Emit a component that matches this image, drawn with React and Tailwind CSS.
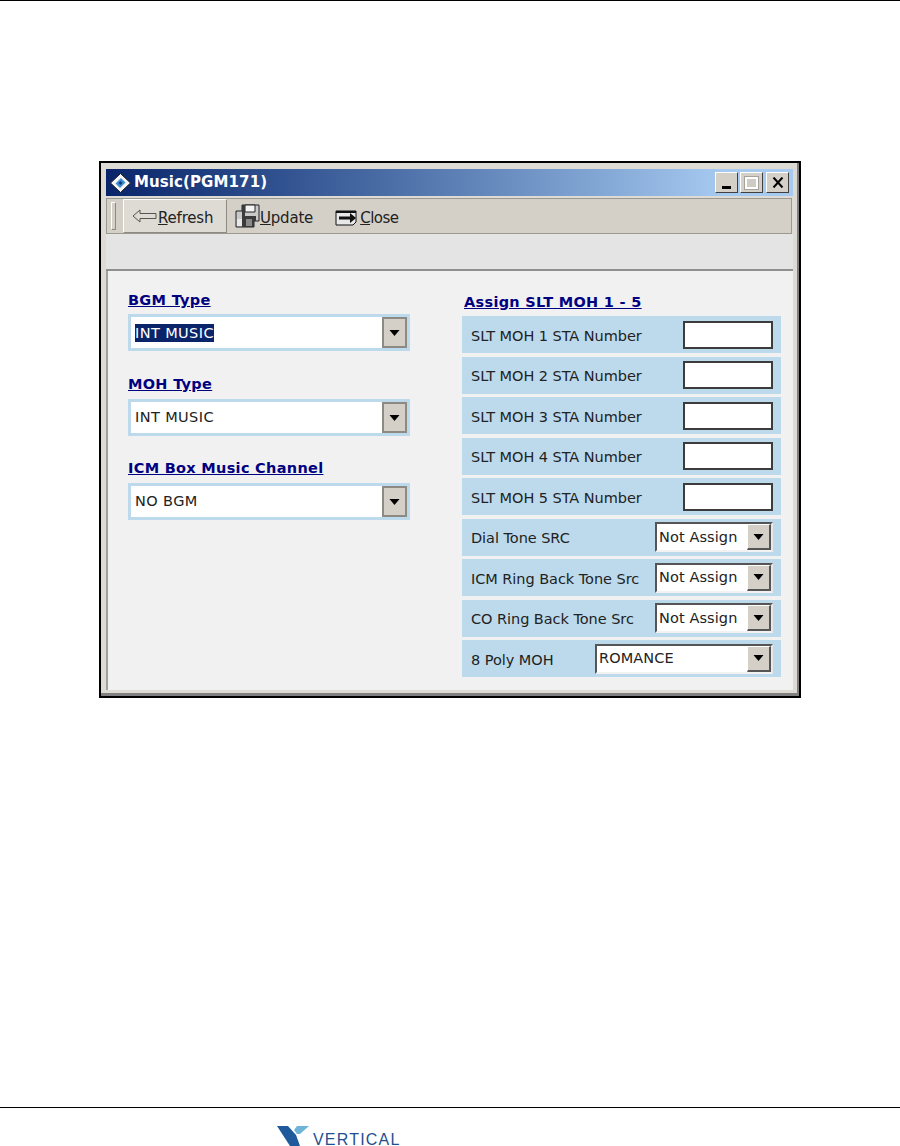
const tahoma = "font-['DejaVu_Sans',sans-serif]";

function Caret() {
  return (
    <svg width="11" height="6" viewBox="0 0 11 6">
      <path d="M0.5 0 L10.5 0 L5.5 6 Z" fill="#000" />
    </svg>
  );
}

function Combo({ value, selected }) {
  return (
    <div className="h-[37px] w-[282px] bg-[#bcdaec] p-[3px]">
      <div className="flex h-[31px] items-center justify-between bg-white">
        <span className={`ml-[4px] text-[14.5px] leading-[18px] tracking-[0.4px] ${selected ? 'bg-[#0a246a] text-white' : 'mb-[1px] text-[#222]'}`}>{value}</span>
        <div className="flex h-[31px] w-[25px] items-center justify-center border-2 border-[#8d8a84] bg-[#d4d0c8]">
          <Caret />
        </div>
      </div>
    </div>
  );
}

function Heading({ children, className }) {
  return (
    <div className={`h-[20px] text-[14.5px] font-bold leading-[20px] tracking-[0.3px] text-[#000080] underline ${className}`}>{children}</div>
  );
}

function Row({ label, children }) {
  return (
    <div className="flex h-[37px] items-center justify-between bg-[#bcdaec] pl-[9px] pr-[8px]">
      <span className="mt-[4px] text-[14.5px] tracking-[-0.05px] text-[#222]">{label}</span>
      {children}
    </div>
  );
}

function StaInput() {
  return <div className="h-[28px] w-[90px] border-2 border-[#3c3c3c] bg-white" />;
}

function RowSelect({ value, wide }) {
  return (
    <div className={`flex h-[30px] items-center justify-between border-2 border-b-[#f2f2f2] border-l-[#555] border-r-[#e8e8e8] border-t-[#555] bg-white ${wide ? 'w-[178px]' : 'w-[118px]'}`}>
      <span className="ml-[2px] mt-[1px] text-[14.5px] tracking-[0.1px] text-[#222]">{value}</span>
      <div className="flex h-[26px] w-[24px] items-center justify-center border-b-2 border-l border-r-2 border-t border-b-[#555] border-l-white border-r-[#555] border-t-white bg-[#d4d0c8]">
        <Caret />
      </div>
    </div>
  );
}

function WinButton({ children }) {
  return (
    <div className="flex h-[21px] w-[23px] items-center justify-center border border-b-[#404040] border-l-white border-r-[#404040] border-t-white bg-[#d4d0c8]">
      {children}
    </div>
  );
}

export default function App() {
  return (
    <div className={`flex h-[1146px] w-[900px] flex-col overflow-hidden bg-white ${tahoma}`}>
      <div className="h-px w-full bg-black" />

      {/* window */}
      <div className="ml-[99px] mt-[160px] h-[537px] w-[702px] border-2 border-black bg-[#dedbd4]">
        <div className="h-full border-b-[3px] border-r-2 border-[#808080] pl-[5px] pt-[6px]">
          <div className="flex h-[27px] w-[687px] items-center justify-between bg-gradient-to-r from-[#0a246a] to-[#a6caf0] to-90% pl-[4px] pr-[4px]">
            <div className="flex items-center gap-[3px]">
              <svg width="21" height="20" viewBox="0 0 21 20">
                <path d="M10.5 0.5 L20.5 10 L10.5 19.5 L0.5 10 Z" fill="#f6f6f6" stroke="#1c1c1c" />
                <path d="M11 5 L15.5 9.5 L10 15 L5.5 10.5 Z" fill="#3f8fd0" />
                <path d="M10.5 8 L12.5 10 L10.5 12 L8.5 10 Z" fill="#0f3b7c" />
              </svg>
              <span className="text-[15px] font-bold tracking-[0.1px] text-white">Music(PGM171)</span>
            </div>
            <div className="flex items-center gap-[2px]">
              <WinButton>
                <div className="mt-[10px] h-[3px] w-[9px] bg-black" />
              </WinButton>
              <WinButton>
                <div className="h-[12px] w-[13px] border-2 border-white bg-[#cfcbc3] outline outline-1 outline-[#a5a29b]" />
              </WinButton>
              <div className="ml-[1px]">
                <WinButton>
                  <svg width="12" height="11" viewBox="0 0 12 11">
                    <path d="M1.5 0.5 L10.5 10.5 M10.5 0.5 L1.5 10.5" stroke="#000" strokeWidth="2" />
                  </svg>
                </WinButton>
              </div>
            </div>
          </div>

          {/* toolbar */}
          <div className="mt-[2px] flex h-[36px] w-[686px] items-center border border-[#9a9892] bg-[#d4d0c8] pl-[4px] text-[15px] tracking-[-0.2px] text-[#222]">
            <div className="h-[28px] w-[5px] border border-b-[#8d8a84] border-l-white border-r-[#8d8a84] border-t-white" />
            <div className="ml-[7px] flex h-[34px] w-[104px] items-center gap-[1px] border border-b-[#8d8a84] border-l-white border-r-[#8d8a84] border-t-white bg-[#dedbd4] pl-[8px]">
              <svg width="25" height="14" viewBox="0 0 25 14">
                <path d="M8 1 L1 7 L8 13 V9.5 H24 V4.5 H8 Z" fill="none" stroke="#555" />
              </svg>
              <span className="mt-[4px]"><span className="underline">R</span>efresh</span>
            </div>
            <div className="ml-[8px] flex items-center">
              <svg width="25" height="24" viewBox="0 0 25 24">
                <path d="M1 7 H7 V1 H24 V17 H19 V23 H1 Z" fill="#c9c9c9" stroke="#222" />
                <path d="M10 1 H20 V8 H10 Z" fill="#f4f4f4" stroke="#222" />
                <path d="M7 1 H10 V12 H21 V17 H19 V23 H7 Z" fill="#3a3a3a" />
                <path d="M2 15 H7 V22 H2 Z" fill="#e8e8e8" />
                <path d="M11 15 H17 V22 H11 Z" fill="#8a8a8a" />
              </svg>
              <span className="mt-[4px]"><span className="underline">U</span>pdate</span>
            </div>
            <div className="ml-[22px] flex items-center">
              <svg width="25" height="20" viewBox="0 0 25 20">
                <path d="M1 5 H21 V16 L18 19 H1 Z" fill="#e8e8e8" stroke="#111" />
                <path d="M1 5 H21 V7 H1 Z" fill="#111" />
                <path d="M4 10.5 H15 V7 L21 12 L15 17 V13.5 H4 Z" fill="#111" />
              </svg>
              <span className="mt-[4px] tracking-[-0.5px]"><span className="underline">C</span>lose</span>
            </div>
          </div>

          <div className="h-[37px] w-[687px] border-b-2 border-[#8f8f8f] bg-[#e4e4e4]" />

          {/* form */}
          <div className="flex h-[419px] w-[687px] border-l-2 border-[#a0a0a0] bg-[#f1f1f1] pl-[20px]">
            <div className="w-[282px] pt-[19px]">
              <Heading className="mb-[4px]">BGM Type</Heading>
              <Combo value="INT MUSIC" selected />
              <Heading className="mb-[5px] mt-[23px]">MOH Type</Heading>
              <Combo value="INT MUSIC" />
              <Heading className="mb-[5px] mt-[22px]">ICM Box Music Channel</Heading>
              <Combo value="NO BGM" />
            </div>
            <div className="ml-[52px] w-[319px] pt-[21px]">
              <Heading className="mb-[4px] ml-[2px]">Assign SLT MOH 1 - 5</Heading>
              <div className="flex flex-col gap-[3.5px]">
                <Row label="SLT MOH 1 STA Number"><StaInput /></Row>
                <Row label="SLT MOH 2 STA Number"><StaInput /></Row>
                <Row label="SLT MOH 3 STA Number"><StaInput /></Row>
                <Row label="SLT MOH 4 STA Number"><StaInput /></Row>
                <Row label="SLT MOH 5 STA Number"><StaInput /></Row>
                <Row label="Dial Tone SRC"><RowSelect value="Not Assign" /></Row>
                <Row label="ICM Ring Back Tone Src"><RowSelect value="Not Assign" /></Row>
                <Row label="CO Ring Back Tone Src"><RowSelect value="Not Assign" /></Row>
                <Row label="8 Poly MOH"><RowSelect value="ROMANCE" wide /></Row>
              </div>
            </div>
          </div>
        </div>
      </div>

      {/* footer */}
      <div className="mt-[409px] h-px w-full bg-black" />
      <div className="ml-[277px] mt-[18px] flex h-[20px] items-start gap-[4px]">
        <svg width="32" height="20" viewBox="0 0 32 20">
          <path d="M0 0 H11 L19 9 L23 20 H13 Z" fill="#1f5a9c" />
          <path d="M20 0 H32 L23 8 H20 L17 4 Z" fill="#6fb4d8" />
        </svg>
        <span className="mt-[8px] font-['Liberation_Sans',sans-serif] text-[16px] leading-[12px] tracking-[1.2px] text-[#1f4f8f]">VERTICAL</span>
      </div>
    </div>
  );
}
